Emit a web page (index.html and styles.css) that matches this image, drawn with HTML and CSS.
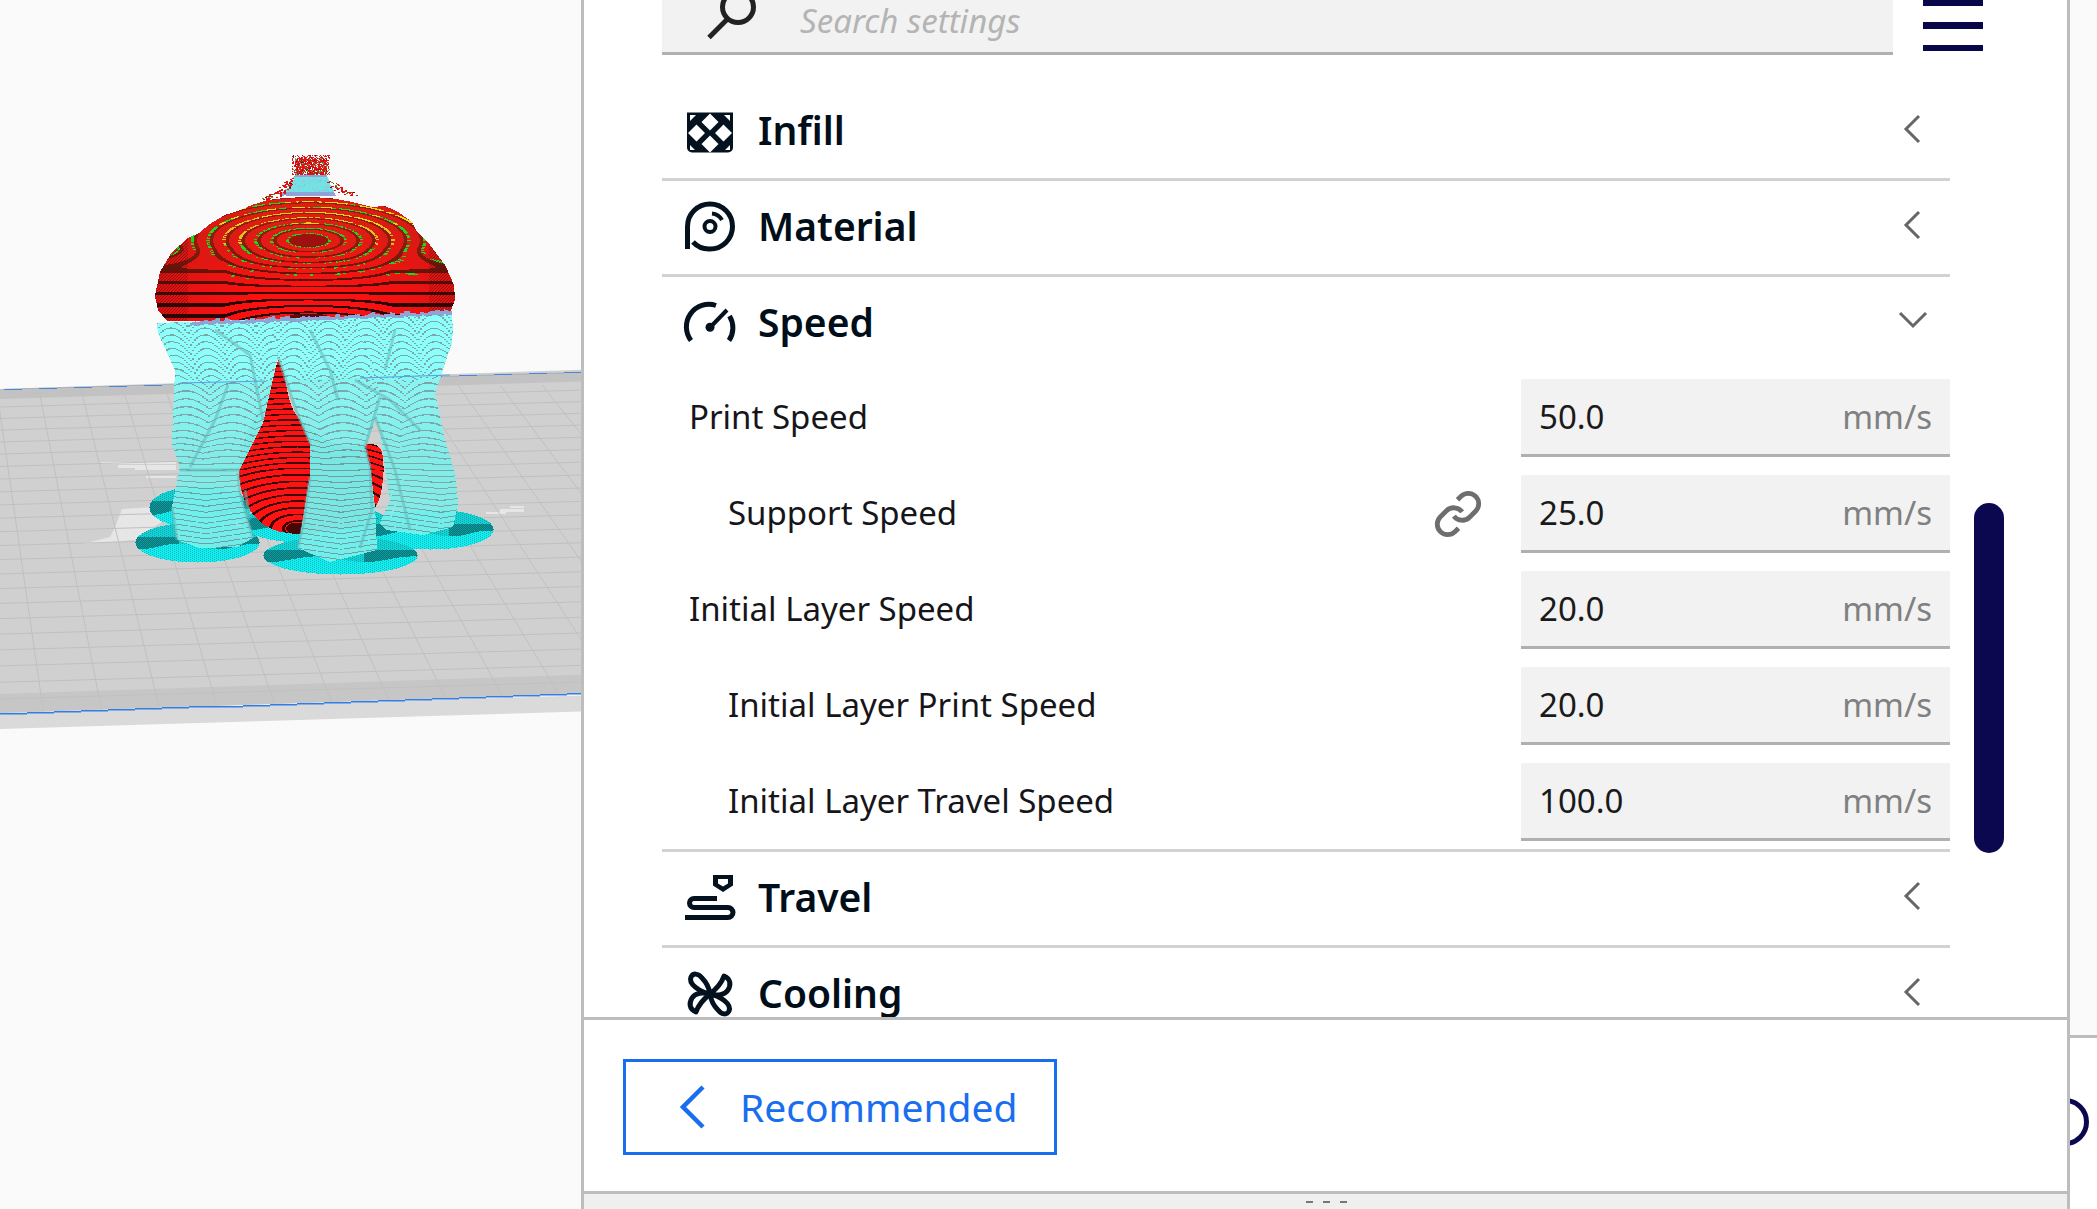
FILE: index.html
```html
<!DOCTYPE html>
<html lang="en">
<head>
<meta charset="utf-8">
<title>Print settings</title>
<link rel="stylesheet" href="styles.css">
</head>
<body>
<main class="app">
  <section class="viewport"><canvas id="plate" width="581" height="1209"></canvas></section>
  <section class="panel">
    <div class="panel-scroll">
      <div class="search-row">
        <div class="search-box">
          <svg class="search-icon" viewBox="0 0 50 55"><circle cx="31" cy="7" r="15.5" fill="none" stroke="#222" stroke-width="5"/><path d="M2 37.5 20 19.5" stroke="#222" stroke-width="5" fill="none"/></svg>
          <span class="search-placeholder">Search settings</span>
        </div>
        <div class="menu-btn"><i></i><i></i><i></i></div>
      </div>
      <div class="category">
        <svg class="cat-icon" viewBox="0 0 50 50"><path class="ink" d="M2 5.5H48V40.5a5 5 0 0 1-5 5H7a5 5 0 0 1-5-5Z"/><path class="paper" d="M25 6.5 33.5 15 25 23.5 16.500 15ZM11.500 17.500 20 26 11.500 34.500 3 26ZM38.500 17.500 47 26 38.500 34.500 30 26ZM25 28.500 33.500 37 25 45.500 16.500 37ZM5 8H11L5 14ZM45 8H39L45 14ZM5 43H10L5 38ZM45 43H40L45 38Z"/></svg>
        <span class="cat-label">Infill</span>
        <svg class="chev" viewBox="0 0 30 30"><path d="M21 2 8 15 21 28"/></svg>
      </div>
      <div class="category">
        <svg class="cat-icon" viewBox="0 0 50 50"><path class="line" d="M2.500 46V23.500A22.500 22.500 0 1 1 25 46 A22 22 0 0 1 8 39"/><circle class="line thin" cx="25" cy="23.500" r="5.500"/><path class="line thin" d="M27 10.500A13 13 0 0 1 37 17"/></svg>
        <span class="cat-label">Material</span>
        <svg class="chev" viewBox="0 0 30 30"><path d="M21 2 8 15 21 28"/></svg>
      </div>
      <div class="category open">
        <svg class="cat-icon" viewBox="0 0 50 50"><path class="line" d="M6 42.500A22.500 22.500 0 0 1 31 7.500M44.500 18A22.500 22.500 0 0 1 44 42.500"/><path class="line thin" d="M25 29.500 42 12"/><circle class="ink" cx="25" cy="29.300" r="4.500"/></svg>
        <span class="cat-label">Speed</span>
        <svg class="chev" viewBox="0 0 30 30"><path d="M2 8 15 21 28 8"/></svg>
      </div>
      <div class="settings">
        <div class="setting"><span class="setting-label">Print Speed</span><div class="field"><span class="field-value">50.0</span><span class="field-unit">mm/s</span></div></div>
        <div class="setting sub"><span class="setting-label">Support Speed</span>
          <svg class="link-icon" viewBox="0 0 24 24"><path d="M10 13a5 5 0 0 0 7.540.54l3-3a5 5 0 0 0-7.070-7.070l-1.720 1.710"/><path d="M14 11a5 5 0 0 0-7.540-.54l-3 3a5 5 0 0 0 7.070 7.070l1.710-1.710"/></svg>
          <div class="field"><span class="field-value">25.0</span><span class="field-unit">mm/s</span></div></div>
        <div class="setting"><span class="setting-label">Initial Layer Speed</span><div class="field"><span class="field-value">20.0</span><span class="field-unit">mm/s</span></div></div>
        <div class="setting sub"><span class="setting-label">Initial Layer Print Speed</span><div class="field"><span class="field-value">20.0</span><span class="field-unit">mm/s</span></div></div>
        <div class="setting sub"><span class="setting-label">Initial Layer Travel Speed</span><div class="field"><span class="field-value">100.0</span><span class="field-unit">mm/s</span></div></div>
      </div>
      <div class="category">
        <svg class="cat-icon" viewBox="0 0 50 50"><path class="ink even" d="M28 1H48V11.500L38 18 28 11.500ZM33 5V9.500L38 12.500 43 9.500V5Z"/><path class="line" d="M32 24.500H9A4.500 4.500 0 0 0 9 33.500H43A5 5 0 0 1 43 43.500H0"/></svg>
        <span class="cat-label">Travel</span>
        <svg class="chev" viewBox="0 0 30 30"><path d="M21 2 8 15 21 28"/></svg>
      </div>
      <div class="category">
        <svg class="cat-icon" viewBox="0 0 50 50"><g class="petals"><path d="M25 24C24 17 21 12 17 8 13 3 8 3 6 7 3 14 15 22 25 24Z"/><path d="M25 24C30 20 36 15 39 6 46 9 46 15 43 20 40 25 32 26 25 24Z"/><path d="M25 24C26 31 29 36 33 40 37 45 42 45 44 41 47 34 35 26 25 24Z"/><path d="M25 24C20 28 14 33 11 42 4 39 4 33 7 28 10 23 18 22 25 24Z"/></g><circle class="ink" cx="25" cy="24" r="4"/></svg>
        <span class="cat-label">Cooling</span>
        <svg class="chev" viewBox="0 0 30 30"><path d="M21 2 8 15 21 28"/></svg>
      </div>
      <div class="scrollbar"></div>
    </div>
    <footer class="panel-footer">
      <div class="mode-btn">
        <svg class="mode-chev" viewBox="0 0 26 44"><path d="M23 2 3 22 23 42"/></svg>
        <span class="mode-label">Recommended</span>
      </div>
    </footer>
    <div class="drag-handle"><i></i><i></i><i></i></div>
  </section>
  <aside class="side">
    <div class="side-top"></div>
    <div class="side-bottom"><svg class="side-arc" viewBox="0 0 19 48"><circle cx="-5" cy="24" r="21.500"/></svg></div>
  </aside>
</main>
<script src="viewport.js"></script>
</body>
</html>
```
FILE: styles.css
```css
* { box-sizing: border-box; }
html, body { margin: 0; height: 100%; overflow: hidden; background: #fff; }
body { font-family: "Noto Sans", "Open Sans", sans-serif; color: #000e1a; }
.app { display: flex; width: 2097px; height: 1209px; }
.viewport { width: 581px; height: 1209px; flex: none; background: #fafafa; }
.viewport canvas { display: block; }
.panel { width: 1489px; height: 1209px; flex: none; display: flex; flex-direction: column; border-left: 3px solid #bdbdbd; border-right: 3px solid #bdbdbd; background: #fff; }
.panel-scroll { position: relative; height: 1017px; flex: none; overflow: hidden; padding-left: 78px; width: 1483px; }
.search-row { display: flex; height: 55px; margin-bottom: 30px; }
.search-box { width: 1231px; height: 55px; display: flex; align-items: flex-start; background: #f2f2f2; border-bottom: 3px solid #b0b0b0; }
.search-icon { width: 50px; height: 55px; flex: none; margin-left: 45px; overflow: visible; }
.search-placeholder { margin-left: 43px; font-size: 33px; line-height: 42px; font-style: italic; color: #b4b4b4; }
.menu-btn { margin-left: 30px; width: 60px; height: 51px; display: flex; flex-direction: column; justify-content: flex-end; gap: 16px; }
.menu-btn i { display: block; height: 6.500px; flex: none; background: #07074a; }
.category { width: 1288px; height: 96px; display: flex; align-items: center; padding-left: 23px; border-bottom: 3px solid #d2d2d2; }
.category.open { height: 92px; border-bottom: 0; }
.cat-icon { width: 50px; height: 50px; flex: none; overflow: visible; }
.ink { fill: #03121e; }
.even { fill-rule: evenodd; }
.paper { fill: #fff; }
.line { fill: none; stroke: #03121e; stroke-width: 5; }
.thin { stroke-width: 4; }
.petals path { fill: none; stroke: #03121e; stroke-width: 5; stroke-linejoin: round; }
.cat-label { margin: 0 0 3px 23px; font-size: 39px; font-weight: 600; line-height: 50px; flex: 1; }
.chev { width: 30px; height: 30px; flex: none; margin: 0 22px 6px 0; }
.chev path { fill: none; stroke: #666; stroke-width: 3; }
.settings { width: 1288px; border-bottom: 3px solid #d2d2d2; }
.setting { height: 96px; display: flex; align-items: flex-start; padding-top: 10px; padding-left: 27px; }
.setting.sub { padding-left: 66px; }
.setting-label { flex: 1; font-size: 33px; line-height: 75px; color: #16161a; }
.link-icon { width: 50px; height: 50px; flex: none; margin: 14px 38px 0 0; fill: none; stroke: #6e6e6e; stroke-width: 2.300; }
.field { width: 429px; height: 78px; flex: none; display: flex; justify-content: space-between; align-items: center; padding: 0 18px; background: #f2f2f2; border-bottom: 3px solid #b0b0b0; font-size: 33px; }
.field-value { color: #1a1a1a; }
.field-unit { color: #808080; }
.scrollbar { position: absolute; left: 1390px; top: 503px; width: 30px; height: 350px; border-radius: 15px; background: #0b0850; }
.panel-footer { height: 177px; flex: none; padding: 39px 0 0 39px; border-top: 3px solid #bdbdbd; border-bottom: 3px solid #bdbdbd; }
.mode-btn { width: 434px; height: 96px; display: flex; align-items: center; padding-left: 54px; border: 3px solid #196ef0; }
.mode-chev { width: 26px; height: 44px; flex: none; fill: none; stroke: #196ef0; stroke-width: 4.500; }
.mode-label { margin: 0 0 2px 34px; font-size: 39px; color: #196ef0; }
.drag-handle { flex: 1; display: flex; justify-content: center; align-items: center; gap: 10px; padding-left: 2px; background: #efefef; }
.drag-handle i { display: block; width: 7px; height: 2px; background: #777; }
.side { width: 27px; height: 1209px; flex: none; display: flex; flex-direction: column; }
.side-top { height: 1038px; flex: none; background: #fafafa; border-bottom: 3px solid #bdbdbd; }
.side-bottom { flex: 1; padding-top: 60px; background: #fff; }
.side-arc { display: block; width: 19px; height: 48px; fill: none; stroke: #0b0850; stroke-width: 5; }
```
FILE: viewport.js
```js
(function () {
  var W = 581, H = 1209;
  var cv = document.getElementById('plate');
  var ctx = cv.getContext('2d');
  var seed = 12345;
  function rnd() { seed = (seed * 16807) % 2147483647; return seed / 2147483647; }
  function hash(a, b) { var s = Math.sin(a * 127.1 + b * 311.7) * 43758.5453; return s - Math.floor(s); }
  function fract(v) { return v - Math.floor(v); }
  function poly(c, pts, smooth) {
    c.beginPath();
    if (!smooth) {
      pts.forEach(function (p, i) { if (i) c.lineTo(p[0], p[1]); else c.moveTo(p[0], p[1]); });
    } else {
      var n = pts.length, m0 = [(pts[n - 1][0] + pts[0][0]) / 2, (pts[n - 1][1] + pts[0][1]) / 2];
      c.moveTo(m0[0], m0[1]);
      for (var i = 0; i < n; i++) {
        var p = pts[i], q = pts[(i + 1) % n];
        c.quadraticCurveTo(p[0], p[1], (p[0] + q[0]) / 2, (p[1] + q[1]) / 2);
      }
    }
    c.closePath();
  }
  function band(y0a, y1a, color, slope) {
    ctx.fillStyle = color;
    ctx.beginPath();
    ctx.moveTo(0, y0a); ctx.lineTo(W, y0a + slope * W);
    ctx.lineTo(W, y1a + slope * W); ctx.lineTo(0, y1a); ctx.closePath(); ctx.fill();
  }
  ctx.fillStyle = '#fafafa'; ctx.fillRect(0, 0, W, H);
  band(713, 729, '#dadada', -0.030);
  band(389, 713, '#d0d0d0', -0.033);
  band(389, 399, '#c2c2c2', -0.030);
  band(694, 713, '#c6c6c6', -0.033);

  // pale patches on the plate
  ctx.fillStyle = '#e6e6e6';
  poly(ctx, [[122, 509], [153, 507], [176, 507], [176, 512], [150, 530], [135, 540], [82, 544], [110, 537], [116, 525]]); ctx.fill();
  [[101, 462, 75, 2], [118, 465, 58, 3], [135, 468, 41, 2], [146, 476, 30, 2], [486, 512, 20, 2], [500, 509, 24, 3], [510, 506, 14, 2]].forEach(function (r) {
    ctx.fillRect(r[0], r[1], r[2], r[3]);
  });

  // grid
  ctx.strokeStyle = '#c0c0c0'; ctx.lineWidth = 1;
  var y = 407;
  while (y < 712) {
    ctx.beginPath(); ctx.moveTo(0, y); ctx.lineTo(W, y - 0.029 * W); ctx.stroke();
    y += 11.5 + (y - 410) * 0.019;
  }
  ctx.save();
  ctx.beginPath();
  ctx.moveTo(0, 390); ctx.lineTo(W, 371); ctx.lineTo(W, 692); ctx.lineTo(0, 713); ctx.closePath(); ctx.clip();
  for (var k = -6; k < 16; k++) {
    var xb = 38 + 42 * k, s = (xb + 125) / 834;
    ctx.beginPath(); ctx.moveTo(xb, 385); ctx.lineTo(xb + s * 340, 725); ctx.stroke();
  }
  ctx.restore();

  // blue plate edges
  for (var bx = 0; bx < W; bx += 27) {
    ctx.fillStyle = '#2f7fe8';
    ctx.fillRect(bx, Math.round(713 - 0.0345 * bx), 27, 1.5);
  }
  for (var bb = 4; bb < W; bb += 35) {
    ctx.fillStyle = '#4b86dc';
    ctx.fillRect(bb, Math.round(389 - 0.03 * bb), 18, 1);
    ctx.fillStyle = '#aab4c0';
    ctx.fillRect(bb + 18, Math.round(389 - 0.03 * (bb + 18)), 17, 1);
  }

  // per pixel work
  var img = ctx.getImageData(0, 0, W, H), d = img.data;
  function put(x, y, r, g, b, a) {
    if (x < 0 || y < 0 || x >= W || y >= H) return;
    var i = (y * W + x) * 4;
    if (a === undefined) a = 1;
    d[i] = d[i] * (1 - a) + r * a;
    d[i + 1] = d[i + 1] * (1 - a) + g * a;
    d[i + 2] = d[i + 2] * (1 - a) + b * a;
  }
  function mask(pts, smooth) {
    var off = document.createElement('canvas'); off.width = W; off.height = H;
    var c = off.getContext('2d'); c.fillStyle = '#000';
    poly(c, pts, smooth); c.fill();
    var m = c.getImageData(0, 0, W, H).data;
    return function (x, y) { return m[(y * W + x) * 4 + 3] > 110; };
  }
  function mix(a, b, t) { return [a[0] + (b[0] - a[0]) * t, a[1] + (b[1] - a[1]) * t, a[2] + (b[2] - a[2]) * t]; }
  function smooth(a, b, v) { var t = Math.max(0, Math.min(1, (v - a) / (b - a))); return t * t * (3 - 2 * t); }

  // raft
  function raft(cx, cy, rx, ry) {
    for (var y = Math.floor(cy - ry); y <= cy + ry; y++) {
      for (var x = Math.floor(cx - rx); x <= cx + rx; x++) {
        var nx = (x - cx) / rx, ny = (y - cy) / ry;
        if (nx * nx + ny * ny > 1) continue;
        var c;
        var hatch = ((x + 2 * y * (nx < 0 ? 1 : -1)) % 4 + 4) % 4;
        if (ny > 0.2 + 0.15 * Math.sin(nx * 5)) {
          c = hatch < 1 ? [10, 186, 190] : [20, 238, 238];
        } else if (ny > -0.3 && Math.abs(nx) > 0.3) {
          c = (x + y) % 2 ? [10, 118, 122] : [13, 152, 156];
        } else {
          c = hatch < 1 ? [12, 165, 168] : [18, 212, 215];
        }
        put(x, y, c[0], c[1], c[2]);
      }
    }
  }
  raft(200, 507, 51, 21);
  raft(315, 523, 75, 20);
  raft(430, 529, 63, 20);
  raft(197, 542, 62, 20);
  raft(340, 555, 77, 19);

  // red body below the cap
  function redRing(x, y) {
    var f = Math.sqrt(Math.pow((x - 297) / 1.9, 2) + Math.pow(y - 528, 2));
    var t = fract(f / (y < 470 ? 5.4 : 6.6));
    if (f < 6) return [70, 6, 6];
    if (t < 0.27) return [60, 6, 6];
    return [255, 18, 18];
  }
  var teardrop = mask([[281, 350], [287, 395], [297, 420], [340, 450], [380, 440], [385, 470], [378, 510], [350, 528], [297, 536], [262, 527], [243, 500], [238, 473], [243, 440], [260, 405], [272, 380]], true);
  var sliver = mask([[332, 368], [334, 368], [340, 398], [335, 400]]);
  for (y = 345; y < 540; y++) for (var x = 225; x < 395; x++) {
    if (teardrop(x, y) || sliver(x, y)) { var c = redRing(x, y); put(x, y, c[0], c[1], c[2]); }
  }

  // dome
  var dome = mask([[167, 321], [158, 310], [155, 296], [160, 272], [172, 252], [188, 238], [199, 233], [210, 224], [225, 215], [238, 211], [252, 205], [268, 200], [285, 198], [308, 197], [330, 198], [352, 202], [372, 207], [385, 206], [398, 212], [412, 222], [417, 232], [430, 245], [445, 265], [454, 285], [455, 300], [450, 312], [440, 316], [300, 320]]);
  for (y = 190; y < 325; y++) for (x = 150; x < 460; x++) {
    if (!dome(x, y)) continue;
    var dx = x - 308;
    var d1 = Math.sqrt(dx * dx / 9 + (y - 240) * (y - 240));
    var gt = Math.max(0, Math.min(1, (y - 255) / 65));
    var g = 0.0018 - 0.0032 * gt;
    var dy = y - 240;
    var dc = Math.min(dx * dx, 7000);
    var f2 = (dy < 30 ? dy : 30 + (dy - 30) * 0.82) + g * dc;
    var mixS = smooth(248, 272, y);
    var f = d1 * (1 - mixS) + f2 * mixS;
    var t = fract(f / 5.3);
    var ringId = Math.floor(f / 5.3);
    var ang = Math.atan2(y - 240, dx / 3);
    var edge = Math.min(1, Math.abs(dx) / 150);
    var vy = Math.min(1, Math.max(0, (y - 225) / 75));
    var base = mix([222, 30, 20], [255, 16, 16], vy);
    base = mix(base, [190, 20, 20], edge * edge * 0.5);
    var lineCol = mix([140, 30, 14], [40, 4, 4], vy * vy);
    var col = base;
    var tk = 0.2 + 0.1 * vy;
    if (t < tk) col = lineCol;
    else if (t < tk + 0.2 && y < 300) {
      var prob = Math.min(0.8, Math.max(0, (282 - y) / 75));
      if (hash(ringId, Math.floor(ang * (26 + ringId * 2))) < prob) {
        col = y < 225 && hash(ringId + 7, Math.floor(ang * 9)) < 0.6 ? [232, 216, 16] : (y < 245 && hash(ringId, 3) < 0.25 ? [230, 190, 30] : [30, 214, 30]);
      }
    }
    if (mixS < 0.5 && d1 < 5.5) col = [160, 16, 16];
    var d2 = Math.sqrt(dx * dx / 22 + (y - 318) * (y - 318));
    if (d2 < 5 && Math.abs(dx) < 30) col = [90, 10, 10];
    if (edge > 0.8 && (x + y) % 3 === 0) col = mix(col, [80, 8, 8], 0.5);
    put(x, y, col[0], col[1], col[2]);
  }

  // support legs
  var legs = [
    { cx: 205, ox: 157, pts: [[157, 323], [158, 333], [175, 370], [172, 443], [180, 467], [172, 507], [177, 540], [200, 548], [237, 547], [253, 538], [240, 493], [238, 473], [263, 423], [278, 357], [273, 329]] },
    { cx: 440, ox: 352, pts: [[352, 320], [452, 313], [452, 343], [435, 393], [445, 440], [455, 473], [458, 503], [453, 527], [423, 535], [387, 530], [380, 523], [390, 500], [380, 433], [375, 417], [365, 380]] },
    { cx: 340, ox: 273, pts: [[273, 329], [278, 357], [297, 413], [310, 443], [310, 477], [298, 548], [330, 562], [377, 550], [375, 507], [370, 467], [365, 447], [377, 417], [380, 397], [372, 360], [352, 320]] }
  ];
  var topBand = mask([[157, 323], [452, 313], [453, 335], [440, 350], [380, 345], [340, 340], [270, 345], [200, 350], [165, 345]]);
  var legMasks = legs.map(function (L) { return mask(L.pts, false); });
  for (var iy = 310; iy < 570; iy++) for (var ix = 150; ix < 465; ix++) {
    var hits = 0, L = null;
    for (var q = 0; q < 3; q++) if (legMasks[q](ix, iy)) { hits++; L = legs[q]; }
    var inBand = topBand(ix, iy);
    if (!hits && !inBand) continue;
    if (!L) L = legs[ix < 273 ? 0 : ix < 352 ? 2 : 1];
    var qx = Math.floor(ix / 2) * 2;
    var wob = 4 * Math.sin(iy / 23 + L.ox);
    var wid = iy < 380 ? 34 : 48;
    var u = fract((qx + wob - L.ox) / wid);
    var a1 = iy < 380 ? 13 : Math.max(0, 13 * (470 - iy) / 90);
    var a2 = iy < 450 ? 0 : Math.min(8, (iy - 450) * 0.12);
    var v = Math.max(0, 1 - Math.abs(qx - L.cx) / 55);
    var yp = iy + a1 * 4 * u * (1 - u) - a2 * v;
    var ph = yp < 440 ? yp / 6.8 : 440 / 6.8 + (yp - 440) / 5.2;
    var bs = mix([130, 255, 250], [118, 240, 235], Math.min(1, Math.max(0, (iy - 360) / 100)));
    var cl = fract(ph) < 0.18 ? [112, 160, 164] : bs;
    var i0 = (iy * W + ix) * 4;
    var tinted = Math.abs(d[i0] - d[i0 + 1]) > 28;
    put(ix, iy, cl[0], cl[1], cl[2], tinted ? 0.96 : (iy < 380 ? 0.92 : 0.86));
  }
  ctx.putImageData(img, 0, 0);

  // seams on the legs
  ctx.strokeStyle = 'rgba(100,180,180,.55)'; ctx.lineWidth = 3;
  [[[190, 467], [215, 420], [228, 385]], [[180, 470], [240, 470]], [[310, 477], [304, 520], [298, 548]], [[370, 467], [372, 510], [360, 548]],
   [[375, 417], [395, 470], [410, 530]], [[355, 380], [390, 400], [420, 430]], [[215, 330], [250, 355], [263, 420]], [[310, 330], [330, 370], [338, 400]], [[245, 490], [250, 520]], [[395, 330], [385, 370]], [[278, 357], [297, 413], [310, 443]], [[380, 397], [365, 447], [370, 467]], [[238, 473], [240, 493], [253, 538]], [[172, 507], [177, 540]]].forEach(function (s) {
    ctx.beginPath(); ctx.moveTo(s[0][0], s[0][1]);
    for (var i = 1; i < s.length; i++) ctx.lineTo(s[i][0], s[i][1]);
    ctx.stroke();
  });
  ctx.strokeStyle = '#5b9fe6'; ctx.lineWidth = 1;
  ctx.beginPath(); ctx.moveTo(180, 383); ctx.lineTo(265, 381); ctx.moveTo(360, 378); ctx.lineTo(450, 375); ctx.stroke();

  // lavender seam
  img = ctx.getImageData(0, 0, W, H); d = img.data;
  for (x = 190; x < 452; x++) {
    var ym = 323 - (x - 190) * 0.038;
    var th = 3 + Math.floor(hash(Math.floor(x / 5), 2) * 3);
    for (y = 0; y < th; y++) put(x, Math.round(ym - y + (hash(Math.floor(x / 4), 5) * 2)), 142, 164, 214);
  }

  // tower on top of the dome
  var tower = mask([[296, 174], [326, 174], [336, 196], [280, 196]]);
  for (y = 172; y < 198; y++) for (x = 278; x < 338; x++) {
    if (tower(x, y)) {
      var n = hash(x, y);
      var tc = n < 0.08 ? [150, 190, 210] : [116, 226, 228];
      if (y < 177 || y > 191) tc = [142, 164, 214];
      put(x, y, tc[0], tc[1], tc[2]);
    }
  }
  function noisy(x0, y0, x1, y1, count, size) {
    for (var i = 0; i < count; i++) {
      var t = rnd();
      var px = Math.round(x0 + (x1 - x0) * t + (rnd() - 0.5) * size);
      var py = Math.round(y0 + (y1 - y0) * t + (rnd() - 0.5) * size);
      var r = rnd();
      var c = r < 0.7 ? [224, 18, 18] : r < 0.88 ? [255, 255, 255] : r < 0.95 ? [40, 180, 40] : [90, 20, 20];
      put(px, py, c[0], c[1], c[2]); put(px + 1, py, c[0], c[1], c[2]);
    }
  }
  for (y = 155; y < 175; y++) for (x = 292; x < 330; x++) {
    var edgeCap = Math.min(x - 292, 329 - x, y - 155);
    var r = rnd();
    if (edgeCap < 3 && r < 0.45) continue;
    r = rnd();
    var cc = r < 0.68 ? [226, 16, 16] : r < 0.8 ? [250, 250, 250] : r < 0.88 ? [40, 190, 60] : r < 0.93 ? [150, 150, 170] : [120, 20, 20];
    put(x, y, cc[0], cc[1], cc[2]);
  }
  noisy(263, 198, 280, 192, 50, 5);
  noisy(280, 193, 290, 180, 50, 7);
  noisy(330, 183, 342, 192, 50, 7);
  noisy(342, 192, 356, 194, 30, 3);
  ctx.putImageData(img, 0, 0);
})();
```
